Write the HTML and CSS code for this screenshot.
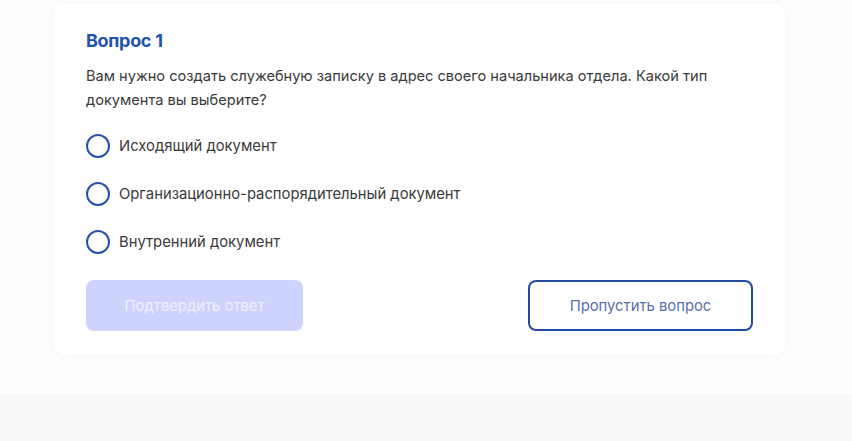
FILE: index.html
```html
<!DOCTYPE html>
<html lang="ru">
<head>
<meta charset="utf-8">
<link rel="stylesheet" href="styles.css">
</head>
<body>
<div class="page">
  <div class="top">
    <div class="card">
      <h2 class="title">Вопрос 1</h2>
      <p class="question">Вам нужно создать служебную записку в адрес своего начальника отдела. Какой тип документа вы выберите?</p>
      <div class="options">
        <label class="option"><span class="radio"></span><span>Исходящий документ</span></label>
        <label class="option"><span class="radio"></span><span>Организационно-распорядительный документ</span></label>
        <label class="option"><span class="radio"></span><span>Внутренний документ</span></label>
      </div>
      <div class="actions">
        <button class="btn btn-primary" disabled>Подтвердить ответ</button>
        <button class="btn btn-outline">Пропустить вопрос</button>
      </div>
    </div>
  </div>
  <div class="bottom"></div>
</div>
</body>
</html>
```

FILE: styles.css
```css
* { box-sizing: border-box; }
html, body { margin: 0; padding: 0; }
body {
  font-family: Inter, "Noto Sans", sans-serif;
  background: #fdfdfd;
  color: #3a3a3a;
  height: 441px;
  overflow: hidden;
}
.page { display: flex; flex-direction: column; height: 100%; }
.top {
  padding: 4px 0 0 54px;
  height: 396px;
  background: #fdfdfd;
}
.card {
  width: 731px;
  background: #fff;
  border-radius: 10px;
  box-shadow: 0 0 12px rgba(0,0,0,0.035);
  padding: 25px 32px 24px 32px;
}
.title {
  margin: 0;
  font-size: 18px;
  line-height: 24px;
  font-weight: 700;
  color: #2152b0;
  letter-spacing: -0.3px;
}
.question {
  margin: 11px 0 0 0;
  font-size: 14.6px;
  line-height: 24px;
  color: #3a3a3a;
}
.options {
  margin-top: 22px;
  display: flex;
  flex-direction: column;
  gap: 24px;
}
.option {
  display: flex;
  align-items: center;
  gap: 9px;
  height: 24px;
  font-size: 14.8px;
  color: #3a3a3a;
}
.radio {
  width: 24px;
  height: 24px;
  border: 2px solid #2a4fae;
  border-radius: 50%;
  flex: none;
}
.actions {
  margin-top: 26px;
  display: flex;
  justify-content: space-between;
}
.btn {
  height: 51px;
  border-radius: 8px;
  font-family: inherit;
  font-size: 14.8px;
}
.btn-primary {
  width: 217px;
  background: #cdd3fc;
  color: #eef0ff;
  border: none;
}
.btn-outline {
  width: 225px;
  background: #fff;
  border: 2px solid #2449a8;
  color: #5470ad;
}
.bottom {
  flex: 1;
  background: #fafafb;
  border-top: 1px solid #f3f3f5;
  box-shadow: 0 -2px 4px rgba(0,0,0,0.015);
}
```
